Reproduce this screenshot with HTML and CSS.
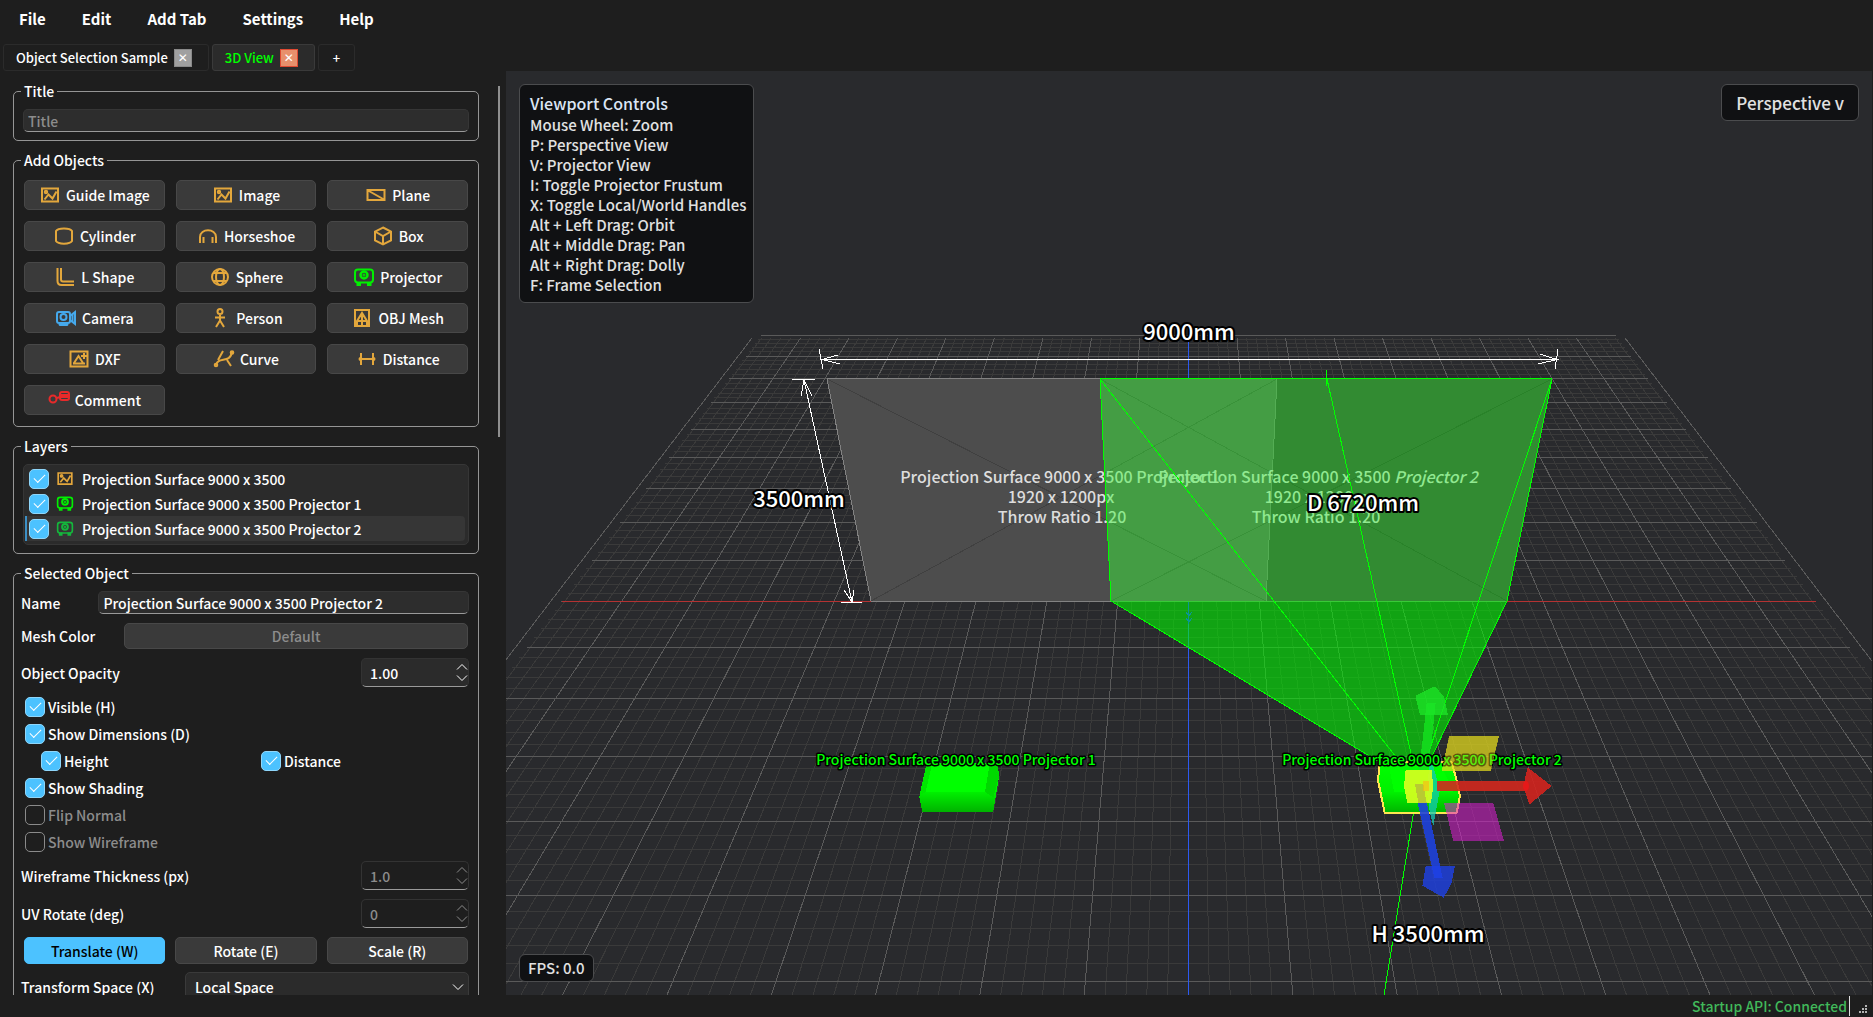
FILE: index.html
```
<!DOCTYPE html>
<html lang="en">
<head>
    <meta charset="UTF-8">
    <meta name="viewport" content="width=device-width, initial-scale=1.0">
    <title>3D View</title>
    <link rel="stylesheet" href="styles.css">
</head>
<body>
    <!-- icon set -->
    <svg class="sprite" aria-hidden="true">
        <symbol id="i-image" viewBox="0 0 20 20"><path d="M2 3.500h16v13H2z"/><path d="M4.500 14.500l4-5 4 4 4-7"/><circle cx="6" cy="7" r="1.200"/></symbol>
        <symbol id="i-plane" viewBox="0 0 20 20"><path d="M1.500 5h17v10h-17zM2 5.500l16 9"/></symbol>
        <symbol id="i-cylinder" viewBox="0 0 20 20"><path d="M2 5c2-3.500 14-3.500 16 0v10c-2 3.500-14 3.500-16 0z"/></symbol>
        <symbol id="i-horseshoe" viewBox="0 0 20 20"><path d="M2 17v-6c0-9 16-9 16 0v6M5.500 17v-6M14.500 17v-6"/></symbol>
        <symbol id="i-box" viewBox="0 0 20 20"><path d="M10 1.500l8 4v9l-8 4-8-4v-9zM2 5.500l8 4.500 8-4.500M10 10v8"/></symbol>
        <symbol id="i-lshape" viewBox="0 0 20 20"><path d="M2.500 1v13c0 3 1 4 4 4H19M6 1v11.500c0 1.500.500 2 2 2h11"/></symbol>
        <symbol id="i-sphere" viewBox="0 0 20 20"><circle cx="10" cy="10" r="8"/><ellipse cx="10" cy="10" rx="4" ry="8"/><path d="M3 6h14M3 14h14"/></symbol>
        <symbol id="i-projector" viewBox="0 0 22 20"><rect x="2" y="2.500" width="18" height="13" rx="3"/><circle cx="11" cy="8" r="3.500" stroke-width="2.500"/><circle cx="11" cy="8" r=".5"/><path d="M4.500 16v2h2.500v-2zM15 16v2h2.500v-2z"/></symbol>
        <symbol id="i-camera" viewBox="0 0 20 20"><rect x="1" y="4" width="13" height="11" rx="2"/><circle cx="7.500" cy="9" r="3"/><path d="M14 8l5-4v12l-5-4M3 16l1 1h7l1-1"/><path d="M16.500 6v8"/></symbol>
        <symbol id="i-person" viewBox="0 0 20 20"><circle cx="10" cy="3.500" r="2.500"/><path d="M5 9.500h10M10 7v6M10 12.500l-4 6.500M10 12.500l4 6.500"/></symbol>
        <symbol id="i-mesh" viewBox="0 0 20 20"><path d="M3 2h14v16H3zM5 13l5-8 5 8zM10 5v13M5 13v4M15 13v4"/></symbol>
        <symbol id="i-dxf" viewBox="0 0 20 20"><path d="M1.500 2.500h17v15h-17zM4 14.500h12M5 14l4.500-7 4.500 7M15 4v6M12 7h6"/></symbol>
        <symbol id="i-curve" viewBox="0 0 22 20"><path d="M3 16c2-9 14-1 16-13M10 2l-5 9M14 11l4 6"/><circle cx="3" cy="16" r="1.300"/><circle cx="19" cy="3.500" r="1.300"/></symbol>
        <symbol id="i-distance" viewBox="0 0 20 20"><path d="M2 10h16M4 4v12M16 4v12"/><circle cx="3.500" cy="10" r="1"/><circle cx="16.500" cy="10" r="1"/></symbol>
        <symbol id="i-comment" viewBox="0 0 22 20"><circle cx="5" cy="9" r="3.500"/><path d="M9 8l3-1"/><rect x="12" y="2" width="9" height="8" rx="2"/><path d="M13 5h7M13 7h7"/></symbol>
        <symbol id="i-up" viewBox="0 0 12 8"><path d="M1 6.500l5-5 5 5"/></symbol>
        <symbol id="i-down" viewBox="0 0 12 8"><path d="M1 1.500l5 5 5-5"/></symbol>
    </svg>

    <nav class="menubar">
        <button>File</button>
        <button>Edit</button>
        <button>Add Tab</button>
        <button>Settings</button>
        <button>Help</button>
    </nav>

    <div class="tabs">
        <div class="tab"><a href="#">Object Selection Sample</a><button class="close" aria-label="Close">✕</button></div>
        <div class="tab active"><a href="#">3D View</a><button class="close" aria-label="Close">✕</button></div>
        <button class="tab add">+</button>
    </div>

    <main class="workspace">
        <aside class="sidebar">
            <div class="panel">
                <fieldset>
                    <legend>Title</legend>
                    <input type="text" class="field full" placeholder="Title" aria-label="Title">
                </fieldset>

                <fieldset>
                    <legend>Add Objects</legend>
                    <div class="objects">
                        <button class="btn"><svg class="icon"><use href="#i-image"/></svg>Guide Image</button>
                        <button class="btn"><svg class="icon"><use href="#i-image"/></svg>Image</button>
                        <button class="btn"><svg class="icon"><use href="#i-plane"/></svg>Plane</button>
                        <button class="btn"><svg class="icon"><use href="#i-cylinder"/></svg>Cylinder</button>
                        <button class="btn"><svg class="icon"><use href="#i-horseshoe"/></svg>Horseshoe</button>
                        <button class="btn"><svg class="icon"><use href="#i-box"/></svg>Box</button>
                        <button class="btn"><svg class="icon"><use href="#i-lshape"/></svg>L Shape</button>
                        <button class="btn"><svg class="icon"><use href="#i-sphere"/></svg>Sphere</button>
                        <button class="btn"><svg class="icon green"><use href="#i-projector"/></svg>Projector</button>
                        <button class="btn"><svg class="icon blue"><use href="#i-camera"/></svg>Camera</button>
                        <button class="btn"><svg class="icon"><use href="#i-person"/></svg>Person</button>
                        <button class="btn"><svg class="icon"><use href="#i-mesh"/></svg>OBJ Mesh</button>
                        <button class="btn"><svg class="icon"><use href="#i-dxf"/></svg>DXF</button>
                        <button class="btn"><svg class="icon"><use href="#i-curve"/></svg>Curve</button>
                        <button class="btn"><svg class="icon"><use href="#i-distance"/></svg>Distance</button>
                        <button class="btn"><svg class="icon red"><use href="#i-comment"/></svg>Comment</button>
                    </div>
                </fieldset>

                <fieldset>
                    <legend>Layers</legend>
                    <div class="layers">
                        <label class="layer"><input type="checkbox" checked><svg class="icon small"><use href="#i-image"/></svg>Projection Surface 9000 x 3500</label>
                        <label class="layer"><input type="checkbox" checked><svg class="icon small green"><use href="#i-projector"/></svg>Projection Surface 9000 x 3500 Projector 1</label>
                        <label class="layer selected"><input type="checkbox" checked><svg class="icon small dim"><use href="#i-projector"/></svg>Projection Surface 9000 x 3500 Projector 2</label>
                    </div>
                </fieldset>

                <fieldset class="properties">
                    <legend>Selected Object</legend>
                    <div class="row name-row">
                        <label for="name">Name</label>
                        <input type="text" id="name" class="field" value="Projection Surface 9000 x 3500 Projector 2">
                    </div>
                    <div class="row color-row">
                        <label for="meshColor">Mesh Color</label>
                        <button id="meshColor" class="btn" disabled>Default</button>
                    </div>
                    <div class="row spin-row">
                        <label for="opacity">Object Opacity</label>
                        <div class="spin">
                            <input type="number" id="opacity" value="1.00" step="0.01">
                            <span class="arrows"><svg><use href="#i-up"/></svg><svg><use href="#i-down"/></svg></span>
                        </div>
                    </div>
                    <div class="checks">
                        <label><input type="checkbox" checked>Visible (H)</label>
                        <label><input type="checkbox" checked>Show Dimensions (D)</label>
                        <div class="sub">
                            <label><input type="checkbox" checked>Height</label>
                            <label><input type="checkbox" checked>Distance</label>
                        </div>
                        <label><input type="checkbox" checked>Show Shading</label>
                        <label class="off"><input type="checkbox" disabled>Flip Normal</label>
                        <label class="off"><input type="checkbox" disabled>Show Wireframe</label>
                    </div>
                    <div class="row spin-row">
                        <label for="thickness">Wireframe Thickness (px)</label>
                        <div class="spin off">
                            <input type="number" id="thickness" value="1.0" step="0.1" disabled>
                            <span class="arrows"><svg><use href="#i-up"/></svg><svg><use href="#i-down"/></svg></span>
                        </div>
                    </div>
                    <div class="row spin-row">
                        <label for="uvRotate">UV Rotate (deg)</label>
                        <div class="spin off">
                            <input type="number" id="uvRotate" value="0" disabled>
                            <span class="arrows"><svg><use href="#i-up"/></svg><svg><use href="#i-down"/></svg></span>
                        </div>
                    </div>
                    <div class="modes">
                        <button class="btn primary">Translate (W)</button>
                        <button class="btn">Rotate (E)</button>
                        <button class="btn">Scale (R)</button>
                    </div>
                    <div class="row space-row">
                        <label for="space">Transform Space (X)</label>
                        <div class="select">
                            <select id="space">
                                <option>Local Space</option>
                                <option>World Space</option>
                            </select>
                            <svg><use href="#i-down"/></svg>
                        </div>
                    </div>
                </fieldset>
            </div>
            <div class="scrollbar"></div>
        </aside>

        <section class="viewport">
            <svg class="scene" viewBox="506 71 1366 924" preserveAspectRatio="xMidYMid slice">
                <defs>
                    <linearGradient id="front" x1="0" y1="0" x2="0" y2="1">
                        <stop offset="0" stop-color="#00ff00"/>
                        <stop offset="0.6" stop-color="#00f000"/>
                        <stop offset="1" stop-color="#00b400"/>
                    </linearGradient>
                </defs>

                <path id="gridMinor" class="grid-minor"/>
                <path id="gridMajor" class="grid-major"/>
                <path class="axis-x" d="M562 601.500H1816"/>
                <path class="axis-z" d="M1188.500 337V995"/>

                <!-- projected images on the wall -->
                <path class="surface" d="M827 379H1552L1507 601H871z"/>
                <path class="surface-overlap" d="M1100 379H1277L1266 601H1111z"/>
                <path class="surface-cross" d="M827 379L1266 601M871 601L1277 379M1100 379L1507 601M1111 601L1552 379"/>
                <path class="surface-edge" d="M827 378.500H1100M827 379L871 601M871 601.500H1507M1277 379L1266 601"/>
                <g class="surface-text">
                    <text x="1060" y="483">Projection Surface 9000 x 3500 Projector 1</text>
                    <text x="1061" y="503">1920 x 1200px</text>
                    <text x="1062" y="523">Throw Ratio 1.20</text>
                    <text x="1318" y="483">Projection Surface 9000 x 3500 <tspan class="slanted">Projector 2</tspan></text>
                    <text x="1318" y="503">1920 x 1200px</text>
                    <text x="1316" y="523">Throw Ratio 1.20</text>
                </g>

                <!-- frustum of projector 2 -->
                <path class="frustum-wall" d="M1100 379H1552L1507 601H1111z"/>
                <path class="frustum-floor" d="M1111 601H1507L1418 785z"/>
                <path class="origin" d="M1188.500 602v22M1186 612l3 4 3-4M1186 618l3 4 3-4"/>
                <path class="frustum-line" d="M1100 378.500H1552M1100 379L1111 601L1418 785L1507 601L1552 379L1418 785L1100 379M1326 370V386M1327 379L1418 785L1384 995"/>

                <path class="dimension" d="M821 359.500H1557M819 349L823 369M838 355L822 359.500L840 364M1558 349L1555 369M1540 354L1557 359.500L1538 364"/>
                <path class="dimension" d="M804 380L852 602M792 379.500H815M841 602.500H862M801 396L804 380L812 396M844 590L852 602L854 590"/>

                <!-- projector 1 -->
                <g transform="translate(780 720) scale(0.3333)">
                    <path fill="url(#front)" d="M440 128H654L657 172 640 275H427L418 230z"/>
                    <path fill="#00d800" d="M628 128H654L657 172 640 232 615 216z"/>
                    <path fill="#00e600" d="M440 128H457L437 216 420 225z"/>
                    <path fill="#00ff00" d="M457 128H630L615 216H437z"/>
                </g>

                <!-- projector 2 with transform gizmo -->
                <g transform="translate(1240 660) scale(0.3333)">
                    <path fill="url(#front)" stroke="#ffe650" stroke-width="6" stroke-linejoin="round" d="M420 306H634L646 345 660 408 650 459H434L414 360z"/>
                    <path fill="#00ff00" d="M445 308H600L640 395H462z"/>
                    <path fill="#14e01e" fill-opacity=".85" d="M560 128H587L575 250 560 330H537L548 240z"/>
                    <path fill="#1ee628" fill-opacity=".75" d="M526 107L585 79 612 110 624 164H540z"/>
                    <path fill="#e6dc1e" fill-opacity=".55" d="M628 228H777L752 332H605z"/>
                    <path fill="#1e41dc" fill-opacity=".9" d="M532 425H560L608 654H583z"/>
                    <path fill="#1e41e6" fill-opacity=".8" d="M557 618H645L634 672 611 713 547 677z"/>
                    <path fill="#dc1ed2" fill-opacity=".55" d="M612 429H760L792 543H640z"/>
                    <path fill="#14c8b4" fill-opacity=".75" d="M570 275L580 320 600 388 580 498 570 460 562 400z"/>
                    <path fill="#d2281e" fill-opacity=".9" d="M590 363H855V393H590z"/>
                    <path fill="#d2231e" fill-opacity=".9" d="M863 322L935 378 868 434 850 378z"/>
                    <ellipse fill="#e61919" cx="858" cy="378" rx="9" ry="15"/>
                    <path fill="#d7ff1e" fill-opacity=".92" d="M497 330H575L580 380 573 429H502L492 380z"/>
                    <path fill="#b4b43c" fill-opacity=".7" d="M525 372H550L560 429H535z"/>
                    <path fill="#ffb414" fill-opacity=".6" d="M550 363H568V393H550z"/>
                </g>

                <g class="object-label">
                    <text x="956" y="765">Projection Surface 9000 x 3500 Projector 1</text>
                    <text x="1422" y="765">Projection Surface 9000 x 3500 Projector 2</text>
                </g>
                <path class="label-tint" d="M1449 736H1499L1491 771H1442z"/>
                <g class="dimension-label">
                    <text x="1189" y="340">9000mm</text>
                    <text x="799" y="507">3500mm</text>
                    <text x="1363" y="511">D 6720mm</text>
                    <text x="1428" y="942">H 3500mm</text>
                </g>
            </svg>

            <div class="help">
                <h2>Viewport Controls</h2>
                <p>Mouse Wheel: Zoom</p>
                <p>P: Perspective View</p>
                <p>V: Projector View</p>
                <p>I: Toggle Projector Frustum</p>
                <p>X: Toggle Local/World Handles</p>
                <p>Alt + Left Drag: Orbit</p>
                <p>Alt + Middle Drag: Pan</p>
                <p>Alt + Right Drag: Dolly</p>
                <p>F: Frame Selection</p>
            </div>
            <button class="view-mode">Perspective v</button>
            <div class="fps">FPS: 0.0</div>
        </section>
    </main>

    <footer class="statusbar">
        <span class="status">Startup API: Connected</span>
        <svg class="grip" viewBox="0 0 9 9"><path d="M6 0h2v2H6zM3 3h2v2H3zM6 3h2v2H6zM0 6h2v2H0zM3 6h2v2H3zM6 6h2v2H6z"/></svg>
    </footer>

    <script src="grid.js"></script>
</body>
</html>
```

FILE: styles.css
```
* {
    box-sizing: border-box;
}
body {
    margin: 0;
    height: 100vh;
    display: flex;
    flex-direction: column;
    overflow: hidden;
    background-color: #1e1e1e;
    color: #fff;
    font-family: "Noto Sans CJK KR", "Noto Sans", sans-serif;
    font-size: 14px;
    font-weight: 500;
    line-height: 20px;
}
button, input, select {
    font: inherit;
    color: inherit;
}
button {
    cursor: pointer;
}
a {
    color: inherit;
    text-decoration: none;
}
.sprite {
    display: none;
}
svg {
    flex: none;
}

/* menu and tabs */
.menubar {
    display: flex;
    gap: 2px;
    height: 44px;
    padding: 0 2px;
}
.menubar button {
    height: 37px;
    padding: 0 17px;
    border: none;
    background: none;
    font-size: 15px;
    font-weight: 700;
}
.tabs {
    display: flex;
    gap: 3px;
    height: 27px;
    padding-left: 3px;
    font-size: 13px;
}
.tab {
    display: flex;
    align-items: center;
    gap: 6px;
    padding: 0 16px 0 12px;
    border: 1px solid #2b2b2b;
    border-radius: 3px;
    background-color: #1e1e1e;
}
.tab.active {
    background-color: #2b2b2b;
    border-color: #3a3a3a;
    color: #00ff00;
}
.tab.add {
    padding: 0 14px;
}
.close {
    width: 18px;
    height: 18px;
    padding: 0;
    border: 1px solid #8a8a8a;
    background-color: #a0a0a0;
    color: #fff;
    font-family: "DejaVu Sans", sans-serif;
    font-size: 12px;
    font-weight: 700;
    line-height: 14px;
}
.active .close {
    border-color: #e04a32;
    background-color: #e8906c;
}

/* sidebar */
.workspace {
    flex: 1;
    display: flex;
    min-height: 0;
    padding-right: 1px;
}
.sidebar {
    display: flex;
    width: 506px;
    padding: 10px 6px 0 13px;
    overflow: hidden;
}
.panel {
    width: 466px;
    height: 100%;
    overflow: hidden;
}
.scrollbar {
    width: 2px;
    height: 351px;
    margin: 5px 0 0 19px;
    background-color: #8f8f8f;
}
fieldset {
    margin: 0 0 9px;
    padding: 8px 9px;
    border: 1px solid #959595;
    border-radius: 5px;
    min-width: 0;
}
legend {
    margin-left: -2px;
    padding: 0 3px;
}
.field {
    height: 23px;
    min-width: 0;
    padding: 0 4px;
    border: 1px solid #363636;
    border-bottom-color: #9a9a9a;
    border-radius: 5px;
    background-color: #2d2d2d;
}
.field::placeholder {
    color: #8c8c8c;
}
.full {
    display: block;
    width: 100%;
}
.objects {
    display: grid;
    grid-template-columns: repeat(3, 1fr);
    gap: 11px;
    padding: 2px 1px 3px;
}
.btn {
    display: flex;
    align-items: center;
    justify-content: center;
    gap: 5px;
    height: 30px;
    padding: 0;
    border: 1px solid #484848;
    border-radius: 5px;
    background-color: #3a3a3a;
}
.btn:disabled {
    color: #8c8c8c;
}
.btn.primary {
    border-color: #4cc2ff;
    background-color: #4cc2ff;
    color: #000;
}
.icon {
    width: 22px;
    height: 20px;
    fill: none;
    stroke: #e3a73c;
    stroke-width: 2;
}
.icon.small {
    width: 18px;
    height: 17px;
    margin: 0 8px 0 7px;
}
.green {
    stroke: #00f000;
}
.blue {
    stroke: #45a9ec;
}
.red {
    stroke: #e82a2a;
}
.dim {
    stroke: #14b83c;
}

input[type="checkbox"] {
    appearance: none;
    display: flex;
    align-items: center;
    justify-content: center;
    width: 20px;
    height: 20px;
    margin: 0;
    border: 1px solid #8a8a8a;
    border-radius: 5px;
}
input[type="checkbox"]:checked {
    border-color: #8fd6fa;
    background-color: #4cc2ff;
}
input[type="checkbox"]:checked::after {
    content: "";
    width: 10px;
    height: 5px;
    margin-top: -4px;
    border: solid #fff;
    border-width: 0 0 1px 1px;
    transform: rotate(-45deg);
}
.layers {
    padding: 1px 3px 3px 1px;
    border: 1px solid #363636;
    border-radius: 5px;
    background-color: #2b2b2b;
}
.layer {
    display: flex;
    align-items: center;
    height: 25px;
    padding-left: 2px;
    border-left: 2px solid transparent;
}
.layer.selected {
    border-left-color: #3c8fc4;
    border-radius: 0 4px 4px 0;
    background-color: #363636;
}

/* selected object */
.properties {
    padding: 8px 9px 20px;
}
.row {
    display: flex;
    align-items: center;
    justify-content: space-between;
    margin-left: -2px;
}
.name-row {
    gap: 38px;
}
.name-row .field {
    flex: 1;
}
.color-row {
    gap: 29px;
    margin-top: 9px;
    padding-right: 1px;
}
.color-row .btn {
    flex: 1;
    height: 26px;
}
.spin-row {
    margin-top: 9px;
}
.spin {
    display: flex;
    width: 108px;
    height: 29px;
    border: 1px solid #333;
    border-bottom-color: #9a9a9a;
    border-radius: 5px;
    background-color: #2b2b2b;
}
.spin.off {
    background: none;
    color: #8c8c8c;
}
.spin input {
    flex: 1;
    width: 0;
    padding: 0 8px;
    border: none;
    background: none;
    appearance: textfield;
}
.spin input::-webkit-inner-spin-button {
    appearance: none;
}
.arrows {
    display: flex;
    flex-direction: column;
    justify-content: space-evenly;
}
.arrows svg, .select svg {
    width: 12px;
    height: 8px;
    fill: none;
    stroke: currentColor;
}
.checks {
    display: flex;
    flex-direction: column;
    gap: 7px;
    margin: 10px 0 0 2px;
}
.checks label {
    display: flex;
    align-items: center;
    gap: 3px;
}
.checks .off {
    color: #8c8c8c;
}
.sub {
    display: grid;
    grid-template-columns: 1fr 1fr;
    column-gap: 12px;
    padding-left: 16px;
}
.modes {
    display: grid;
    grid-template-columns: repeat(3, 1fr);
    gap: 10px;
    margin: 9px 1px 0;
}
.modes .btn {
    height: 27px;
}
.space-row {
    margin-top: 8px;
}
.select {
    display: flex;
    align-items: center;
    width: 284px;
    height: 30px;
    padding-right: 4px;
    border: 1px solid #3a3a3a;
    border-radius: 5px;
    background-color: #2b2b2b;
}
.select select {
    appearance: none;
    flex: 1;
    padding-left: 9px;
    border: none;
    background: none;
}

/* viewport */
.viewport {
    position: relative;
    flex: 1;
    min-width: 0;
    background-color: #292a2d;
}
.scene {
    display: block;
    width: 100%;
    height: 100%;
}
.scene path {
    shape-rendering: crispEdges;
}
.grid-minor, .grid-major, .axis-x, .axis-z, .surface-cross, .surface-edge,
.frustum-line, .dimension, .origin {
    fill: none;
}
.grid-minor {
    stroke: #3a3a3a;
}
.grid-major {
    stroke: #5a5a5a;
}
.axis-x {
    stroke: #b43232;
}
.axis-z {
    stroke: #2d5af0;
}
.surface {
    fill: #4d4d4d;
}
.surface-overlap {
    fill: #696969;
}
.surface-cross {
    stroke: #000;
    stroke-opacity: 0.16;
}
.surface-edge {
    stroke: #828282;
}
.surface-text {
    fill: #ddd;
    font-size: 16px;
    text-anchor: middle;
}
.slanted {
    font-style: italic;
}
.frustum-wall {
    fill: #00ff00;
    fill-opacity: 0.35;
}
.frustum-floor {
    fill: #00ff00;
    fill-opacity: 0.57;
}
.frustum-line {
    stroke: #00ff00;
}
.origin {
    stroke: #0a9696;
}
.dimension {
    stroke: #fff;
}
.object-label, .dimension-label {
    text-anchor: middle;
    paint-order: stroke;
    stroke: #000;
    stroke-linejoin: round;
}
.object-label {
    fill: #00ff00;
    stroke-width: 3px;
    font-size: 14px;
}
.label-tint {
    fill: #e6dc1e;
    fill-opacity: 0.4;
}
.dimension-label {
    fill: #fff;
    stroke-width: 4px;
    font-size: 22px;
}
.help, .view-mode, .fps {
    position: absolute;
    border: 1px solid #4b4c4e;
    border-radius: 6px;
    background-color: #101113;
    color: #e1e1e1;
    font-size: 15px;
}
.help {
    top: 13px;
    left: 13px;
    padding: 7px 7px 7px 10px;
}
.help h2 {
    margin: 0 0 1px;
    color: #dce6f5;
    font-size: 16px;
    font-weight: 500;
    line-height: 22px;
}
.help p {
    margin: 0;
}
.view-mode {
    top: 13px;
    right: 13px;
    height: 37px;
    padding: 0 14px;
    font-size: 17px;
}
.fps {
    bottom: 13px;
    left: 13px;
    padding: 3px 8px;
}

/* status bar */
.statusbar {
    display: flex;
    justify-content: flex-end;
    gap: 9px;
    height: 22px;
    padding: 1px 5px 1px 0;
}
.status {
    padding-right: 2px;
    border-right: 1px solid #e0e0e0;
    color: #41b95a;
}
.grip {
    align-self: flex-end;
    width: 9px;
    height: 9px;
    margin-bottom: 2px;
    fill: #b4b4b4;
}
```

FILE: grid.js
```
// Floor grid: 18 x 18 cells, each split in five, seen from the camera
const CENTER_X = 1188.5;
const HORIZON_Y = -232.8;
const DEPTH_SCALE = 16013;
const CAMERA_Z = 19.19;
const SPREAD = 0.08496;
const HALF = 8.85;
const NEAR = 6.6;

function project(x, z) {
    const drop = DEPTH_SCALE / (CAMERA_Z - z);
    return (CENTER_X + x * SPREAD * drop).toFixed(1) + ' ' + (HORIZON_Y + drop).toFixed(1);
}

let minor = '';
let major = '';
for (let i = -45; i <= 45; i++) {
    const v = i / 5;
    let d = 'M' + project(v, -HALF) + 'L' + project(v, NEAR);
    if (v < NEAR) {
        d += 'M' + project(-HALF, v) + 'L' + project(HALF, v);
    }
    if (i % 5 === 0) {
        major += d;
    } else {
        minor += d;
    }
}
document.getElementById('gridMinor').setAttribute('d', minor);
document.getElementById('gridMajor').setAttribute('d', major);
```
